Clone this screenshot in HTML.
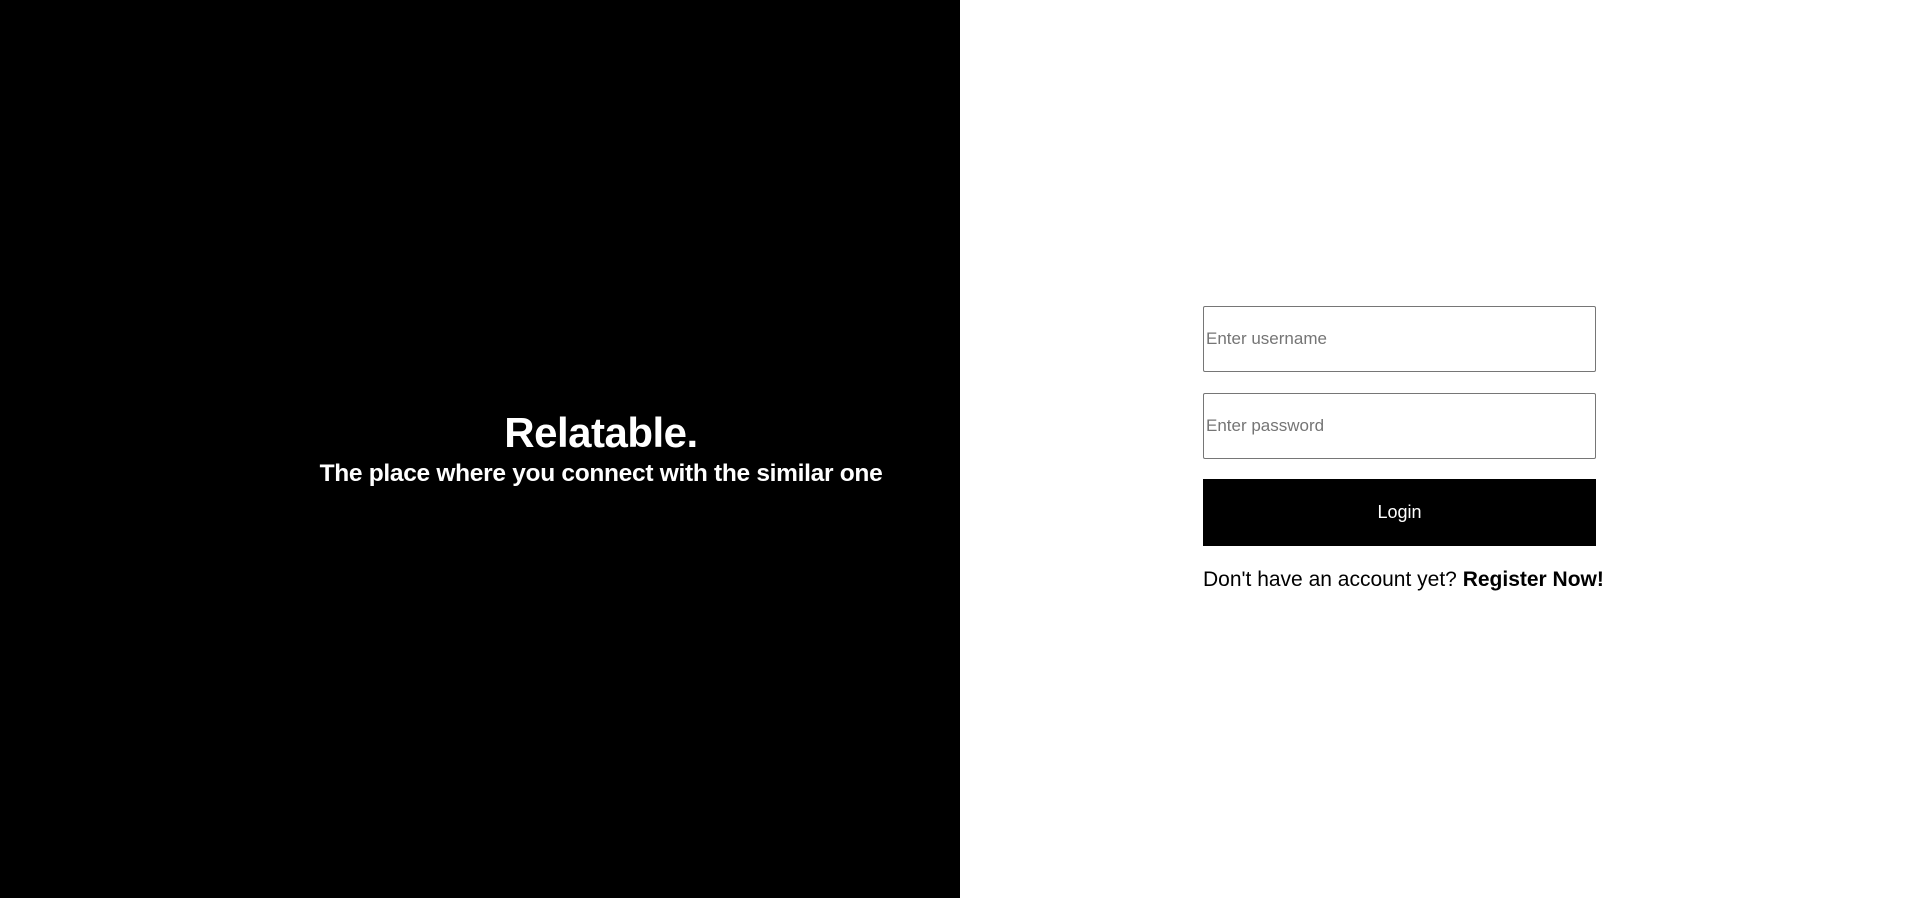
<!DOCTYPE html>
<html><head><meta charset="utf-8"><style>
html,body{margin:0;padding:0;width:1920px;height:898px;overflow:hidden;font-family:"Liberation Sans",sans-serif}
.l{position:absolute;left:0;top:0;width:960px;height:898px;background:#000;color:#fff}
.r{position:absolute;left:960px;top:0;width:960px;height:898px;background:#fff}
.t{position:absolute;left:0;width:1202px;text-align:center;font-weight:bold;white-space:nowrap}
.in{position:absolute;left:1203px;width:389px;height:64px;border:1px solid #767676;border-radius:2px;box-sizing:content-box;font-size:17px;color:#757575;line-height:64px;padding-left:2px}
.btn{position:absolute;left:1203px;top:479px;width:393px;height:67px;background:#000;color:#fff;text-align:center;line-height:67px;font-size:18px}
.q{position:absolute;left:1203px;top:568px;font-size:21px;color:#000;white-space:nowrap}
</style></head><body>
<div class="l">
<div class="t" style="top:412px;font-size:42px;line-height:42px;letter-spacing:-0.5px">Relatable.</div>
<div class="t" style="top:461px;font-size:24.5px;line-height:25px;letter-spacing:-0.3px">The place where you connect with the similar one</div>
</div>
<div class="r"></div>
<div class="in" style="top:306px">Enter username</div>
<div class="in" style="top:393px">Enter password</div>
<div class="btn">Login</div>
<div class="q">Don't have an account yet? <b>Register Now!</b></div>
</body></html>
